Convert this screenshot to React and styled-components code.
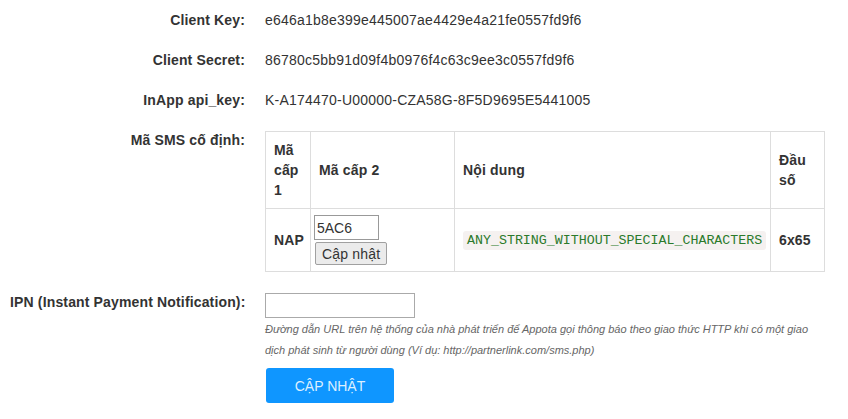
import styled, { createGlobalStyle } from "styled-components";

const GlobalStyle = createGlobalStyle`
    body {
        margin: 0;
        background: #fff;
        font-family: "Liberation Sans", Arial, sans-serif;
        font-size: 14px;
        color: #333;
    }
`;

const Container = styled.div`
    width: 848px;
    padding: 10px 24px 0 10px;
    box-sizing: border-box;
    display: flex;
    flex-direction: column;
    gap: 20px;
`;

const Row = styled.div`
    display: flex;
    align-items: flex-start;
`;

const Label = styled.div`
    width: 235px;
    flex: none;
    margin-right: 20px;
    text-align: right;
    font-weight: bold;
    line-height: 20px;
    letter-spacing: 0.15px;
    white-space: nowrap;
`;

const Value = styled.div`
    flex: 1;
    line-height: 20px;
    letter-spacing: 0.22px;
`;

const Table = styled.table`
    width: 559px;
    border-collapse: collapse;
    table-layout: fixed;
    margin-top: 1px;
    letter-spacing: 0.15px;
`;

const Cell = styled.td`
    border: 1px solid #ddd;
    padding: ${(p) => (p.$tight ? "6px 2px" : "8px")};
    vertical-align: middle;
    line-height: 20px;
    font-weight: ${(p) => (p.$bold ? "bold" : "normal")};
    text-align: left;
`;

const HeadCell = styled(Cell).attrs({ as: "th" })`
    font-weight: bold;
`;

const SmallInput = styled.input`
    display: block;
    width: 65px;
    height: 25px;
    box-sizing: border-box;
    border: 1px solid #999;
    padding: 1px 2px;
    font-family: inherit;
    font-size: 14px;
    color: #333;
    margin-left: 1px;
`;

const SmallButton = styled.button`
    display: block;
    margin: 2px 0 0 2px;
    height: 23px;
    padding: 0 6px;
    border: 1px solid #a0a0a0;
    border-radius: 2px;
    background: #ebebeb;
    font-family: inherit;
    font-size: 14px;
    letter-spacing: 0.2px;
    color: #333;
`;

const Code = styled.code`
    font-family: "Liberation Mono", "Courier New", monospace;
    font-size: 13.3px;
    letter-spacing: 0;
    color: #2b7a2b;
    background: #f5f1f0;
    padding: 2px 4px;
    border-radius: 3px;
`;

const UrlInput = styled.input`
    display: block;
    width: 150px;
    height: 25px;
    box-sizing: border-box;
    border: 1px solid #aaa;
    margin: 1px 0 0;
    font-family: inherit;
    font-size: 14px;
`;

const Help = styled.p`
    margin: 1px 0 0;
    font-size: 11px;
    line-height: 21px;
    letter-spacing: 0;
    font-style: italic;
    color: #666;
`;

const SubmitButton = styled.button`
    margin: 7px 0 0 1px;
    width: 128px;
    height: 35px;
    border: none;
    border-radius: 3px;
    background: #0f96ff;
    color: #dcefff;
    font-family: inherit;
    font-size: 14px;
`;

const fields = [
    ["Client Key:", "e646a1b8e399e445007ae4429e4a21fe0557fd9f6"],
    ["Client Secret:", "86780c5bb91d09f4b0976f4c63c9ee3c0557fd9f6"],
    ["InApp api_key:", "K-A174470-U00000-CZA58G-8F5D9695E5441005"],
];

const App = () => {
  return (
    <Container>
      <GlobalStyle />
      {fields.map(([label, value]) => (
        <Row key={label}>
          <Label>{label}</Label>
          <Value>{value}</Value>
        </Row>
      ))}
      <Row>
        <Label>Mã SMS cố định:</Label>
        <Value>
          <Table>
            <colgroup>
              <col style={{ width: 45 }} />
              <col style={{ width: 144 }} />
              <col style={{ width: 316 }} />
              <col style={{ width: 54 }} />
            </colgroup>
            <thead>
              <tr>
                <HeadCell>Mã cấp 1</HeadCell>
                <HeadCell>Mã cấp 2</HeadCell>
                <HeadCell>Nội dung</HeadCell>
                <HeadCell>Đầu số</HeadCell>
              </tr>
            </thead>
            <tbody>
              <tr>
                <Cell $bold>NAP</Cell>
                <Cell $tight>
                  <SmallInput defaultValue="5AC6" />
                  <SmallButton>Cập nhật</SmallButton>
                </Cell>
                <Cell>
                  <Code>ANY_STRING_WITHOUT_SPECIAL_CHARACTERS</Code>
                </Cell>
                <Cell $bold>6x65</Cell>
              </tr>
            </tbody>
          </Table>
        </Value>
      </Row>
      <Row>
        <Label>IPN (Instant Payment Notification):</Label>
        <Value>
          <UrlInput />
          <Help>
            Đường dẫn URL trên hệ thống của nhà phát triển để Appota gọi thông báo theo giao thức HTTP khi có một giao dịch phát sinh từ người dùng (Ví dụ: http://partnerlink.com/sms.php)
          </Help>
          <SubmitButton>CẬP NHẬT</SubmitButton>
        </Value>
      </Row>
    </Container>
  )
}

export default App
